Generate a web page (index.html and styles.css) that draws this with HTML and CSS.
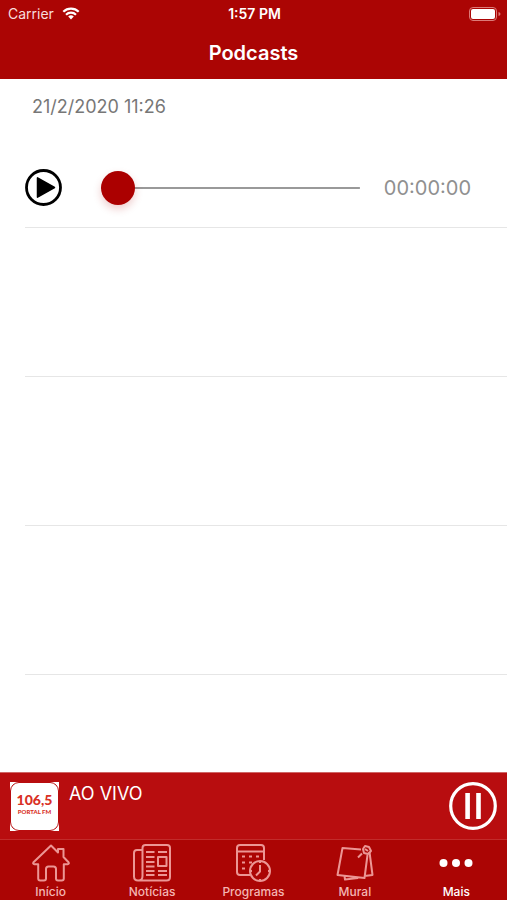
FILE: index.html
```html
<!DOCTYPE html>
<html lang="pt-BR">
<head>
    <meta charset="UTF-8">
    <meta name="viewport" content="width=device-width, initial-scale=1.0">
    <title>Podcasts</title>
    <link rel="stylesheet" href="styles.css">
</head>
<body>
    <header class="header">
        <div class="status-bar">
            <div class="carrier">
                <span>Carrier</span>
                <svg class="wifi" viewBox="0 0 18 13" aria-hidden="true">
                    <path d="M1.3 4.8a11 11 0 0 1 15.4 0M4 7.7a7.2 7.2 0 0 1 10 0" fill="none" stroke="#fff" stroke-width="2.2"/>
                    <path d="M6.2 9.6a4 4 0 0 1 5.6 0L9 12.4z" fill="#fff"/>
                </svg>
            </div>
            <span class="clock">1:57 PM</span>
            <svg class="battery" viewBox="0 0 32 14" aria-hidden="true">
                <rect x="0.5" y="0.5" width="27" height="13" rx="3.5" fill="none" stroke="#dc7b78"/>
                <rect x="2" y="2" width="24" height="10" rx="2" fill="#fff"/>
                <path d="M29.5 5v4q2-.6 2-2t-2-2z" fill="#dc7b78"/>
            </svg>
        </div>
        <h1 class="title">Podcasts</h1>
    </header>

    <main>
        <ul class="podcasts">
            <li class="podcast">
                <time class="date" datetime="2020-02-21T11:26">21/2/2020 11:26</time>
                <div class="controls">
                    <button class="play" type="button" aria-label="Reproduzir">
                        <svg viewBox="0 0 37 37" aria-hidden="true">
                            <circle cx="18.5" cy="18.5" r="17" fill="none" stroke="#000" stroke-width="2.8"/>
                            <path d="M12.5 8.8v19.4l17-9.7z" fill="#000" stroke="#000" stroke-width="1.5" stroke-linejoin="round"/>
                        </svg>
                    </button>
                    <input class="seek" type="range" min="0" max="100" value="0" aria-label="Posição">
                    <span class="time">00:00:00</span>
                </div>
            </li>
            <li class="podcast"></li>
            <li class="podcast"></li>
            <li class="podcast"></li>
        </ul>
    </main>

    <section class="player">
        <div class="logo">
            <div class="logo-card">
                <span class="logo-number">106,5</span>
                <span class="logo-name">PORTAL FM</span>
            </div>
        </div>
        <p class="live">AO VIVO</p>
        <button class="pause" type="button" aria-label="Pausar">
            <svg viewBox="0 0 48 48" aria-hidden="true">
                <circle cx="24" cy="24" r="22.3" fill="none" stroke="#fff" stroke-width="3.2"/>
                <path d="M16.3 11h4.6v26h-4.6zM27.2 11h4.6v26h-4.6z" fill="#fff"/>
            </svg>
        </button>
    </section>

    <nav class="tabs">
        <a class="tab" href="#inicio">
            <svg class="tab-icon" viewBox="0 0 38 38" aria-hidden="true">
                <path d="M19 1.5 1.5 18.3q-1 1.7 1 2h3.7v14.2q0 2 2 2H12q2 0 2-2V25q0-2.5 2.5-2.5h5q2.5 0 2.5 2.5v9.500q0 2 2 2h3.800q2 0 2-2V20.300h3.700q2-.3 1-2L31.500 13V5H26v3.500z"/>
            </svg>
            <span>Início</span>
        </a>
        <a class="tab" href="#noticias">
            <svg class="tab-icon" viewBox="0 0 38 38" aria-hidden="true">
                <path d="M9.500 32V4q0-3 3-3H34q3 0 3 3v29q0 3.500-3.500 3.500H5Q1 36.500 1 32.500V9q0-3 3-3h5.500M9.500 32q0 4.500-4 4.500"/>
                <path d="M13 8h8.500M25 8h9M13 13h8.500M13 18h8.500M13 22.500h8.500M13 27h8.500M13 31h8.500M25 27h9M25 31h9M25 13h8.500v9H25z"/>
            </svg>
            <span>Notícias</span>
        </a>
        <a class="tab" href="#programas">
            <svg class="tab-icon" viewBox="0 0 38 38" aria-hidden="true">
                <path d="M16 31H6q-3 0-3-3V4q0-3 3-3h21q3 0 3 3v12M3 7.500h27"/>
                <path d="M8 12.500h3M15 12.500h3M22 12.500h3M8 18.500h3M15 18.500h3M8 24.500h3"/>
                <circle cx="26" cy="27" r="10"/>
                <path d="M26 21v6.500l-4 4M26 17v2M26 35v2M16 27h2M34 27h2"/>
            </svg>
            <span>Programas</span>
        </a>
        <a class="tab" href="#mural">
            <svg class="tab-icon" viewBox="0 0 38 38" aria-hidden="true">
                <path d="M25 5.500 6.500 4l-5 27 27 3L31.500 11M8.500 32l.5 3.500 13-1.500M33.500 8l3 23-8 1"/>
                <path d="m26 9.500-4 4M27 5l2-3 4 1 2 4-3 3-4-1zM29 5l3 2"/>
            </svg>
            <span>Mural</span>
        </a>
        <a class="tab active" href="#mais" aria-current="page">
            <svg class="tab-icon" viewBox="0 0 38 38" aria-hidden="true">
                <g fill="#fff" stroke="none">
                    <circle cx="6.500" cy="19" r="4"/>
                    <circle cx="19" cy="19" r="4"/>
                    <circle cx="31.500" cy="19" r="4"/>
                </g>
            </svg>
            <span>Mais</span>
        </a>
    </nav>
</body>
</html>
```

FILE: styles.css
```css
* {
    box-sizing: border-box;
}

body {
    font-family: Inter, "Liberation Sans", sans-serif;
    margin: 0;
    min-height: 100vh;
    display: flex;
    flex-direction: column;
    background-color: #fff;
}

button {
    padding: 0;
    border: none;
    background: none;
    cursor: pointer;
}

svg {
    display: block;
}

.header {
    background-color: #ab0504;
    color: #fff;
    padding-bottom: 12px;
}

.status-bar {
    display: grid;
    grid-template-columns: 1fr auto 1fr;
    align-items: center;
    height: 27px;
    padding: 0 6px 0 8px;
    font-size: 14px;
}

.carrier {
    display: flex;
    align-items: center;
    gap: 8px;
    color: #f7dddd;
}

.wifi {
    width: 18px;
    height: 13px;
}

.clock {
    font-weight: 600;
}

.battery {
    width: 32px;
    height: 14px;
    justify-self: end;
}

.title {
    margin: 0;
    padding-top: 12px;
    font-size: 20px;
    font-weight: 600;
    line-height: 28px;
    text-align: center;
}

main {
    flex: 1;
}

.podcasts {
    margin: 0;
    padding: 0 0 0 25px;
    list-style: none;
}

.podcast {
    height: 149px;
    border-bottom: 1px solid #e6e6e6;
}

.date {
    display: block;
    padding: 17px 7px 0;
    font-size: 18px;
    line-height: 22px;
    color: #777;
}

.controls {
    display: flex;
    align-items: center;
    padding: 51px 36px 0 0;
}

.play,
.play svg {
    width: 37px;
    height: 37px;
}

.seek {
    flex: 1;
    min-width: 0;
    height: 34px;
    margin: 0 24px 0 39px;
    appearance: none;
    background: linear-gradient(#999, #999) center / 100% 2px no-repeat;
    cursor: pointer;
}

.seek::-webkit-slider-thumb {
    appearance: none;
    width: 34px;
    height: 34px;
    border-radius: 50%;
    background-color: #ab0000;
    box-shadow: 0 4px 8px rgba(171, 0, 0, 0.2);
}

.time {
    font-size: 20px;
    color: #909090;
}

.player {
    display: flex;
    align-items: center;
    height: 67px;
    padding: 0 10px;
    background-color: #b80d0f;
    border-top: 1px solid #cf6565;
    color: #fff;
}

.logo {
    width: 49px;
    height: 49px;
    background-color: #fff;
}

.logo-card {
    display: flex;
    flex-direction: column;
    align-items: center;
    height: 100%;
    padding-top: 9px;
    border: 1px solid #b80d0f;
    border-radius: 9px;
    color: #d93025;
    font-family: Lato, "Liberation Sans", sans-serif;
    font-weight: 900;
}

.logo-number {
    font-size: 14px;
    line-height: 16px;
}

.logo-name {
    font-size: 6px;
    line-height: 8px;
    white-space: nowrap;
}

.live {
    flex: 1;
    align-self: flex-start;
    margin: 0;
    padding: 10px 10px 0;
    font-size: 18px;
    line-height: 22px;
}

.pause,
.pause svg {
    width: 48px;
    height: 48px;
}

.tabs {
    display: grid;
    grid-template-columns: repeat(5, 1fr);
    height: 61px;
    background-color: #ab0504;
    border-top: 1px solid #c22b2b;
}

.tab {
    display: flex;
    flex-direction: column;
    align-items: center;
    gap: 2px;
    padding-top: 4px;
    color: #f4b5b3;
    font-size: 12px;
    font-weight: 500;
    line-height: 16px;
    text-decoration: none;
}

.tab-icon {
    width: 38px;
    height: 38px;
    fill: none;
    stroke: #ec9694;
    stroke-width: 2;
    stroke-linejoin: round;
}

.active {
    color: #fff;
}
```
